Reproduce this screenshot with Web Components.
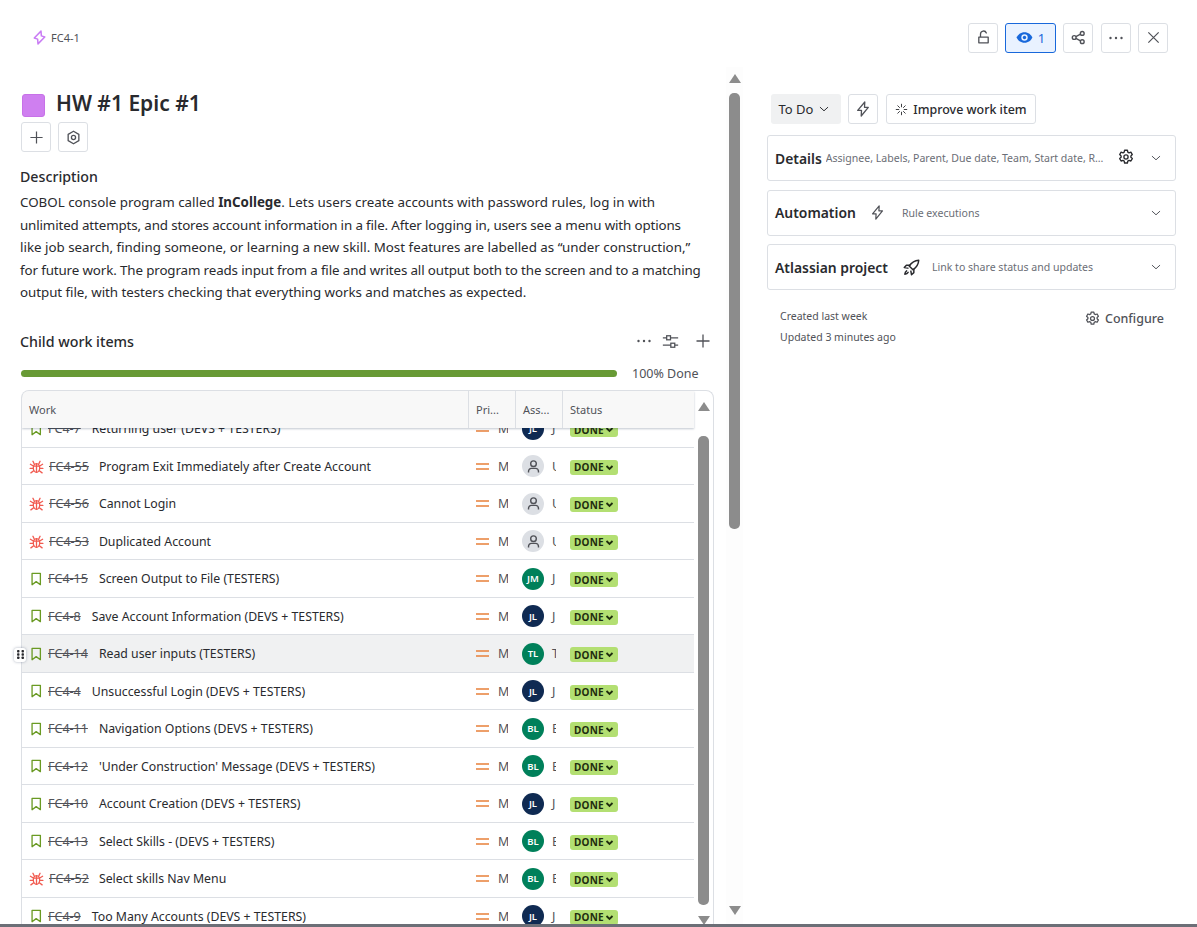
<!DOCTYPE html>
<html lang="en"><head><meta charset="utf-8"><title>FC4-1</title>
<style>
html,body{margin:0;height:100%;background:#fff;overflow:hidden}
body{font-family:"Noto Sans","Open Sans",sans-serif;color:#292a2e}
</style></head>
<body>
<fc-app>
  <fc-topbar slot="top"></fc-topbar>
  <fc-left slot="left">
    <fc-table>
      <work-row key="FC4-7" type="story" av="JL" name="J">Returning user (DEVS + TESTERS)</work-row>
      <work-row key="FC4-55" type="bug" av="" name="Unassigned">Program Exit Immediately after Create Account</work-row>
      <work-row key="FC4-56" type="bug" av="" name="Unassigned">Cannot Login</work-row>
      <work-row key="FC4-53" type="bug" av="" name="Unassigned">Duplicated Account</work-row>
      <work-row key="FC4-15" type="story" av="JM" name="J">Screen Output to File (TESTERS)</work-row>
      <work-row key="FC4-8" type="story" av="JL" name="J">Save Account Information (DEVS + TESTERS)</work-row>
      <work-row key="FC4-14" type="story" av="TL" name="T" hover>Read user inputs (TESTERS)</work-row>
      <work-row key="FC4-4" type="story" av="JL" name="J">Unsuccessful Login (DEVS + TESTERS)</work-row>
      <work-row key="FC4-11" type="story" av="BL" name="B">Navigation Options (DEVS + TESTERS)</work-row>
      <work-row key="FC4-12" type="story" av="BL" name="B">'Under Construction' Message (DEVS + TESTERS)</work-row>
      <work-row key="FC4-10" type="story" av="JL" name="J">Account Creation (DEVS + TESTERS)</work-row>
      <work-row key="FC4-13" type="story" av="BL" name="B">Select Skills - (DEVS + TESTERS)</work-row>
      <work-row key="FC4-52" type="bug" av="BL" name="B">Select skills Nav Menu</work-row>
      <work-row key="FC4-9" type="story" av="JL" name="J">Too Many Accounts (DEVS + TESTERS)</work-row>
    </fc-table>
  </fc-left>
  <fc-scrollbar slot="sb" up="4" tmt="10" thumb="436" gap="377"></fc-scrollbar>
  <fc-right slot="right"></fc-right>
</fc-app>
<script>
const ICONS={
 epic:'<path d="M9.600 1.200 10 6.300l3.600 1.200-7.200 7.300L6 9.700 2.400 8.500z" fill="none" stroke="#c97cf4" stroke-width="1.600" stroke-linejoin="round"/>',
 unlock:'<path d="M4.800 7.500V4.300a3.200 3.200 0 0 1 6.200-1.100M3 7.500h10v6.200H3z" fill="none" stroke="currentColor" stroke-width="1.400" stroke-linejoin="round" stroke-linecap="round"/>',
 eye:'<path d="M8 3C4.400 3 1.700 5.400.6 8c1.100 2.600 3.800 5 7.400 5s6.300-2.400 7.400-5C14.300 5.400 11.600 3 8 3z" fill="currentColor"/><circle cx="8" cy="8" r="3" fill="#e9f2ff"/><circle cx="8" cy="8" r="1.600" fill="currentColor"/>',
 share:'<g fill="none" stroke="currentColor" stroke-width="1.500"><circle cx="3.400" cy="8" r="2"/><circle cx="12" cy="3.600" r="2"/><circle cx="12" cy="12.400" r="2"/><path d="M5.200 7.100l5-2.600M5.200 8.900l5 2.600"/></g>',
 more:'<g fill="currentColor"><circle cx="2.500" cy="8" r="1.200"/><circle cx="8" cy="8" r="1.200"/><circle cx="13.500" cy="8" r="1.200"/></g>',
 close:'<path d="M2.500 2.500l11 11M13.500 2.500l-11 11" stroke="currentColor" stroke-width="1.300" fill="none"/>',
 plus:'<path d="M8 1.500v13M1.500 8h13" stroke="currentColor" stroke-width="1.300" fill="none"/>',
 hex:'<path d="M8 1.300l5.700 3.300v6.800L8 14.700l-5.700-3.300V4.600z" fill="none" stroke="currentColor" stroke-width="1.400" stroke-linejoin="round"/><circle cx="8" cy="8" r="2.200" fill="none" stroke="currentColor" stroke-width="1.400"/>',
 chev:'<path d="M3 5.800l5 4.600 5-4.600" fill="none" stroke="currentColor" stroke-width="1.300" stroke-linecap="round" stroke-linejoin="round"/>',
 bolt:'<path d="M9.800 1 9.500 6.300h3.800L6.200 15l.3-5.600H2.700z" fill="none" stroke="currentColor" stroke-width="1.300" stroke-linejoin="round"/>',
 spark:'<g stroke="currentColor" stroke-width="1.100" stroke-linecap="round"><path d="M8 1.500v3.200M8 11.300v3.200M1.500 8h3.200M11.300 8h3.200M3.400 3.400l2.200 2.200M10.400 10.400l2.200 2.200M12.600 3.400l-2.200 2.200M5.600 10.400l-2.200 2.200"/></g>',
 gear:'<g fill="none" stroke="currentColor" stroke-width="1.350" stroke-linejoin="round"><path d="M6.600 1.200h2.800l.4 1.900 1.200.7 1.900-.6 1.400 2.400-1.400 1.300v1.400l1.400 1.300-1.400 2.400-1.900-.6-1.200.7-.4 1.900H6.600l-.4-1.900-1.200-.7-1.900.6-1.400-2.400 1.400-1.300V6.900L1.700 5.600l1.400-2.400 1.900.6 1.200-.7z"/><circle cx="8" cy="8" r="2.100"/></g>',
 rocket:'<g fill="none" stroke="currentColor" stroke-width="1.400" stroke-linejoin="round" stroke-linecap="round"><path d="M14.800 1.200c-3.800.2-6.500 1.800-9 5.400l3.600 3.600c3.600-2.500 5.200-5.200 5.400-9z"/><path d="M6.400 5.800H3.200L1.200 8l3.400.6M10.200 9.600v3.200L8 14.800l-.6-3.400M3.400 11.200c-1 .6-1.500 1.800-1.700 3.100 1.300-.2 2.500-.7 3.100-1.700"/></g>',
 sliders:'<g fill="none" stroke="currentColor" stroke-width="1.200"><path d="M.8 4.500h3.600M8 4.500h7.200M.8 11.500h7.500M12 11.500h3.200"/><rect x="4.400" y="2.600" width="3.600" height="3.800"/><rect x="8.300" y="9.600" width="3.700" height="3.800"/></g>',
 story:'<path d="M3.500 1.500h9.500v13L8.200 11 3.500 14.500z" fill="none" stroke="#6a9a23" stroke-width="1.500" stroke-linejoin="round"/>',
 bug:'<g fill="none" stroke="#f15b50" stroke-width="1.400" stroke-linecap="round"><ellipse cx="8" cy="9.500" rx="3.400" ry="4.600"/><path d="M4.800 7.500h6.400M8 5v9M5.600 5.400 4.200 2.400M10.400 5.400l1.400-3M4.600 7.500 1.500 5.600M11.400 7.500l3.100-1.900M4.600 10H1.200M11.400 10h3.400M5 12.500l-3 2.300M11 12.500l3 2.300"/></g>',
 person:'<g fill="none" stroke="#505258" stroke-width="1.500"><circle cx="8" cy="5" r="3"/><path d="M2.700 14.500v-1.500a3 3 0 0 1 3-3h4.600a3 3 0 0 1 3 3v1.500"/></g>',
 grip:'<g fill="#292a2e"><rect x="3" y="1.500" width="3.500" height="3.500" rx="1"/><rect x="9.500" y="1.500" width="3.500" height="3.500" rx="1"/><rect x="3" y="6.300" width="3.500" height="3.500" rx="1"/><rect x="9.500" y="6.300" width="3.500" height="3.500" rx="1"/><rect x="3" y="11" width="3.500" height="3.500" rx="1"/><rect x="9.500" y="11" width="3.500" height="3.500" rx="1"/></g>'
};
class Base extends HTMLElement{
  html(){return ''}
  connectedCallback(){ if(!this.shadowRoot){ this.attachShadow({mode:'open'}).innerHTML=this.html(); } }
}
class FcIcon extends Base{
  html(){const s=this.getAttribute('size')||16;const n=this.getAttribute('name');
    return `<style>:host{display:inline-flex;flex:none;width:${s}px;height:${s}px}svg{display:block;width:100%;height:100%}</style><svg viewBox="0 0 16 16" aria-hidden="true">${ICONS[n]||''}</svg>`}
}
class FcBtn extends Base{
  html(){return `<style>:host{display:inline-flex;flex:none;box-sizing:border-box;height:30px;min-width:30px;align-items:center;justify-content:center;gap:5px;border:1px solid #dcdfe4;border-radius:3px;background:#fff;color:#505258;font-size:13px}
  :host([active]){background:#e9f2ff;border-color:#1868db;color:#1868db}
  :host([text]){font-weight:500;color:#292a2e;font-size:12.450px}
  :host([flat]){border-color:transparent;background:#f0f1f2;font-weight:400;color:#292a2e;font-size:13px;padding-right:3px}</style><slot></slot>`}
}
class FcApp extends Base{
  html(){return `<style>
  :host{display:flex;flex-direction:column;height:927px;overflow:hidden}
  .top{flex:none;height:70px}
  .main{flex:1;min-height:0;display:flex}
  .l{flex:none;width:729px;min-width:0;overflow:hidden}
  .s{flex:none;width:11px;display:flex;background:#fdfdfd;box-shadow:0 0 0 3px #fdfdfd}
  .r{flex:1;min-width:0;padding-left:27px;padding-right:21px}
  .bar{flex:none;height:3px;background:#6c6f77}
  </style><div class="top"><slot name="top"></slot></div>
  <div class="main"><div class="l"><slot name="left"></slot></div><div class="s"><slot name="sb"></slot></div><div class="r"><slot name="right"></slot></div></div><div class="bar"></div>`}
}
class FcTopbar extends Base{
  html(){return `<style>
  :host{display:flex;align-items:center;height:70px;box-sizing:border-box;padding:6px 29px 0 32px}
  .key{display:flex;align-items:center;gap:4px;font-size:11px;color:#505258;flex:1;margin-top:-2px}
  .acts{display:flex;gap:7px;align-items:center;margin-top:-1px}
  .w{width:51px;font-size:13px}
  .sh{margin-right:1px}
  </style><div class="key"><fc-icon name="epic" size="15"></fc-icon><span>FC4-1</span></div>
  <div class="acts"><fc-btn><fc-icon name="unlock" size="15"></fc-icon></fc-btn>
  <fc-btn active class="w"><fc-icon name="eye" size="17"></fc-icon><span>1</span></fc-btn>
  <fc-btn class="sh"><fc-icon name="share" size="15"></fc-icon></fc-btn>
  <fc-btn><fc-icon name="more" size="16"></fc-icon></fc-btn>
  <fc-btn><fc-icon name="close" size="15"></fc-icon></fc-btn></div>`}
}
class FcLeft extends Base{
  html(){return `<style>
  :host{display:flex;flex-direction:column;height:854px;box-sizing:border-box;padding:24px 15px 0 20px}
  .title{display:flex;align-items:center;gap:11px;padding-left:2px;height:23px}
  .sq{width:23px;height:23px;border-radius:3px;background:#cf7ff0;box-sizing:border-box;border:1px solid #c771e8;flex:none}
  h1{margin:-5px 0 0;font-size:21px;font-weight:600;line-height:23px;color:#292a2e}
  .btns{display:flex;gap:7px;margin:5px 0 0 1px}
  h2{margin:14px 0 0;font-size:14.200px;font-weight:500;line-height:22px;color:#292a2e}
  p{margin:3px 0 0;font-size:13.350px;line-height:22.500px;color:#292a2e}
  p span{display:block;white-space:nowrap}
  b{font-weight:700}
  .l2{letter-spacing:-.13px}.l4{letter-spacing:-.12px}.l5{letter-spacing:-.05px}
  .ch{display:flex;align-items:center;margin-top:25.500px;height:24px}
  .ch span{flex:1;font-size:14.250px;font-weight:500}
  .ch .i{display:flex;align-items:center;color:#505258;gap:10px;margin-right:3px}
  .pr{display:flex;align-items:center;height:20px;margin:10.500px 0 0 1px;gap:15px}
  .track{flex:none;width:596px;height:7px;border-radius:4px;background:#689a35}
  .pr span{font-size:12.500px;color:#505258}
  ::slotted(fc-table){margin:6px 0 0 1px}
  </style>
  <div class="title"><div class="sq"></div><h1>HW #1 Epic #1</h1></div>
  <div class="btns"><fc-btn><fc-icon name="plus" size="15"></fc-icon></fc-btn><fc-btn><fc-icon name="hex" size="15"></fc-icon></fc-btn></div>
  <h2>Description</h2>
  <p><span>COBOL console program called <b>InCollege</b>. Lets users create accounts with password rules, log in with</span> <span class="l2">unlimited attempts, and stores account information in a file. After logging in, users see a menu with options</span> <span>like job search, finding someone, or learning a new skill. Most features are labelled as “under construction,”</span> <span class="l4">for future work. The program reads input from a file and writes all output both to the screen and to a matching</span> <span class="l5">output file, with testers checking that everything works and matches as expected.</span></p>
  <div class="ch"><span>Child work items</span><div class="i"><fc-icon name="more" size="16"></fc-icon><fc-icon name="sliders" size="17"></fc-icon><fc-icon name="plus" size="16" style="margin-left:6px"></fc-icon></div></div>
  <div class="pr"><div class="track"></div><span>100% Done</span></div>
  <slot></slot>`}
}
class FcTable extends Base{
  html(){return `<style>
  :host{display:block;position:relative;box-sizing:border-box;height:534px;flex:none;width:693px}
  .box{box-sizing:border-box;height:100%;border:1px solid #dcdfe4;border-bottom:0;border-radius:8px 8px 0 0;display:flex;overflow:hidden}
  .col{flex:none;width:672px;display:flex;flex-direction:column;min-height:0}
  .head{flex:none;display:grid;grid-template-columns:447px 47px 47px 1fr;height:37px;background:#f8f8f8;box-shadow:0 1px 2px rgba(9,30,66,.25);position:relative;z-index:1;font-size:11px;color:#505258}
  .head div{display:flex;align-items:center;padding-left:7px;border-right:1px solid #dcdfe4;box-sizing:border-box}
  .head div:last-child{border-right:0}
  .list{flex:1;min-height:0;overflow:hidden}
  .inner{margin-top:-17.500px}
  .sb{flex:none;width:19px;padding-left:4px;box-sizing:border-box;display:flex}
  .grip{position:absolute;left:-7px;top:258px;width:12px;height:14px;background:#fff;border-radius:3px;box-shadow:0 0 3px rgba(9,30,66,.35);display:flex;align-items:center;justify-content:center;z-index:2}
  </style><div class="box"><div class="col"><div class="head"><div>Work</div><div>Pri...</div><div>Ass...</div><div>Status</div></div>
  <div class="list"><div class="inner"><slot></slot></div></div></div>
  <div class="sb"><fc-scrollbar up="11" tmt="25" thumb="469" gap="11"></fc-scrollbar></div></div>
  <div class="grip"><fc-icon name="grip" size="11"></fc-icon></div>`}
}
class WorkRow extends Base{
  html(){const a=n=>this.getAttribute(n)||'';const av=a('av');
    const color=av==='JL'?'#0f2a52':'#00805a';
    const avatar=av?`<div class="av" style="background:${color}">${av}</div>`:`<div class="av none"><fc-icon name="person" size="15"></fc-icon></div>`;
    return `<style>
  :host{display:grid;grid-template-columns:447px 47px 47px 1fr;height:37.500px;box-sizing:border-box;border-bottom:1px solid #dcdfe4;padding-top:1px;align-items:center;background:#fff;color:#292a2e}
  :host([hover]){background:#f0f1f2}
  .w{display:flex;align-items:center;padding-left:7px;white-space:nowrap;overflow:hidden}
  .k{font-size:12.500px;color:#505258;text-decoration:line-through;margin-left:5px;margin-right:10px}
  :host([type=story]) .k{margin-right:11px}
  .s{font-size:12.300px}
  .p{display:flex;align-items:center;padding-left:7px;margin-right:8px;overflow:hidden;white-space:nowrap;font-size:12.500px;color:#505258}
  .lines{flex:none;display:block;width:13px;height:7px;margin-right:9px}
  .a{display:flex;align-items:center;padding-left:6px;margin-right:7px;overflow:hidden;white-space:nowrap;font-size:12.500px;color:#505258}
  .av{flex:none;width:22px;height:22px;border-radius:50%;display:flex;align-items:center;justify-content:center;color:#fff;font-size:9.500px;font-weight:600;margin-right:8px}
  .none{background:#dcdfe4}
  .st{padding-left:7px;display:flex;align-items:center}
  .lz{display:inline-flex;align-items:center;gap:1px;height:15px;padding:0 3px 0 4px;margin-top:2px;width:48px;box-sizing:border-box;background:#b3df72;border-radius:3px;color:#1f2d0f;font-size:10px;font-weight:700;letter-spacing:.2px}
  </style>
  <div class="w"><fc-icon name="${a('type')}" size="${a('type')==='bug'?15:14}"></fc-icon><span class="k">${a('key')}</span><span class="s"><slot></slot></span></div>
  <div class="p"><svg class="lines" viewBox="0 0 13 7"><path d="M0 1h13M0 6h13" stroke="#e8803a" stroke-width="1.500"/></svg><span>Medium</span></div>
  <div class="a">${avatar}<span>${a('name')}</span></div>
  <div class="st"><span class="lz">DONE<svg width="9" height="9" viewBox="0 0 9 9"><path d="M1.500 3l3 3 3-3" fill="none" stroke="#1f2d0f" stroke-width="1.800"/></svg></span></div>`}
}
class FcScrollbar extends Base{
  html(){const v=n=>+(this.getAttribute(n)||0);
    return `<style>
  :host{display:flex;flex-direction:column;align-items:center;width:11px;height:100%;flex:none}
  .up,.dn{flex:none;width:0;height:0;border-left:6.500px solid transparent;border-right:6.500px solid transparent}
  .up{border-bottom:9px solid #8c8c8c;margin-top:${v('up')}px}
  .dn{border-top:9px solid #8c8c8c;margin-top:${v('gap')}px}
  .th{flex:none;width:11px;height:${v('thumb')}px;background:#8c8c8c;border-radius:5px;margin-top:${v('tmt')}px}
  </style><div class="up"></div><div class="th"></div><div class="dn"></div>`}
}
class FcPanel extends Base{
  html(){const t=this.getAttribute('label'),s=this.getAttribute('sub'),i=this.getAttribute('icon'),g=this.hasAttribute('gear');
    return `<style>
  :host{display:flex;align-items:center;height:46px;box-sizing:border-box;border:1px solid #dcdfe4;border-radius:3px;padding:0 13px 0 7px;background:#fff}
  .t{font-size:13.900px;font-weight:600;color:#292a2e;white-space:nowrap;flex:none}
  .s{font-size:10.550px;color:#6b6e76;white-space:nowrap}
  .ic{margin:0 17px 0 14px;color:#505258;display:flex}
  :host([icon=rocket]) .ic{margin:0 12px 0 15px;color:#292a2e}
  :host([gear]) .s{margin-left:4px;width:281px;overflow:hidden;text-overflow:ellipsis;flex:none}
  .sp{flex:1}
  .g{color:#292a2e;display:flex;margin:-2px 16px 0 0}
  .c{color:#505258;display:flex}
  </style><span class="t">${t}</span>${i?`<span class="ic"><fc-icon name="${i}" size="${i==='rocket'?17:15}"></fc-icon></span>`:''}<span class="s">${s}</span><span class="sp"></span>${g?`<span class="g"><fc-icon name="gear" size="16"></fc-icon></span>`:''}<span class="c"><fc-icon name="chev" size="12"></fc-icon></span>`}
}
class FcRight extends Base{
  html(){return `<style>
  :host{display:block;padding-top:24px}
  .tb{display:flex;gap:7px;padding-left:4px}
  .todo{width:70px}
  .imp{margin-left:1px;width:150px}
  .panels{display:flex;flex-direction:column;gap:8.500px;margin-top:11px}
  .foot{display:flex;justify-content:space-between;margin-top:16px;padding:0 12px 0 13px}
  .m{font-size:10.500px;line-height:21px;color:#505258}
  .cfg{display:flex;align-items:center;gap:5px;height:26px;margin-top:-1px;font-size:12.500px;font-weight:500;color:#505258}
  </style>
  <div class="tb"><fc-btn text flat class="todo"><span>To Do</span><fc-icon name="chev" size="12"></fc-icon></fc-btn>
  <fc-btn><fc-icon name="bolt" size="16"></fc-icon></fc-btn>
  <fc-btn text class="imp"><fc-icon name="spark" size="13"></fc-icon><span>Improve work item</span></fc-btn></div>
  <div class="panels">
  <fc-panel gear label="Details" sub="Assignee, Labels, Parent, Due date, Team, Start date, Reporter"></fc-panel>
  <fc-panel label="Automation" icon="bolt" sub="Rule executions"></fc-panel>
  <fc-panel label="Atlassian project" icon="rocket" sub="Link to share status and updates"></fc-panel>
  </div>
  <div class="foot"><div class="m">Created last week<br>Updated 3 minutes ago</div><div class="cfg"><fc-icon name="gear" size="15"></fc-icon><span>Configure</span></div></div>`}
}
const D={'fc-icon':FcIcon,'fc-btn':FcBtn,'fc-topbar':FcTopbar,'fc-left':FcLeft,'fc-table':FcTable,'work-row':WorkRow,'fc-scrollbar':FcScrollbar,'fc-panel':FcPanel,'fc-right':FcRight,'fc-app':FcApp};
for(const k in D)customElements.define(k,D[k]);
</script>
</body></html>
